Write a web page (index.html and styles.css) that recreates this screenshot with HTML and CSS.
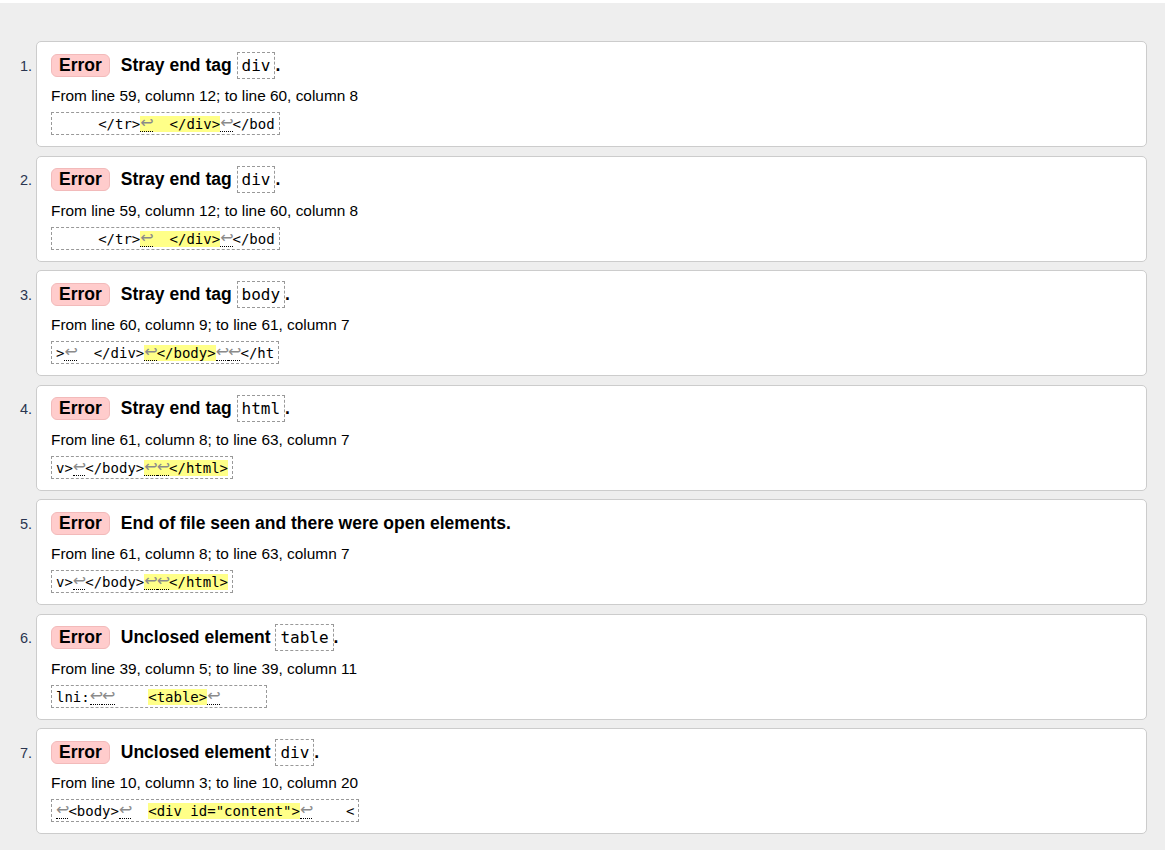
FILE: index.html
```html
<!DOCTYPE html>
<html lang="en">
<head>
<meta charset="utf-8">
<title>Validation results</title>
<link rel="stylesheet" href="styles.css">
</head>
<body>
<ol class="messages">
  <li class="msg">
    <p class="head"><span class="badge">Error</span><span class="text">Stray end tag <code>div</code>.</span></p>
    <p class="loc">From line 59, column 12; to line 60, column 8</p>
    <p class="extract"><code>     &lt;/tr&gt;<b><span class="lf">↩</span>  &lt;/div&gt;</b><span class="lf">↩</span>&lt;/bod</code></p>
  </li>
  <li class="msg">
    <p class="head"><span class="badge">Error</span><span class="text">Stray end tag <code>div</code>.</span></p>
    <p class="loc">From line 59, column 12; to line 60, column 8</p>
    <p class="extract"><code>     &lt;/tr&gt;<b><span class="lf">↩</span>  &lt;/div&gt;</b><span class="lf">↩</span>&lt;/bod</code></p>
  </li>
  <li class="msg">
    <p class="head"><span class="badge">Error</span><span class="text">Stray end tag <code>body</code>.</span></p>
    <p class="loc">From line 60, column 9; to line 61, column 7</p>
    <p class="extract"><code>&gt;<span class="lf">↩</span>  &lt;/div&gt;<b><span class="lf">↩</span>&lt;/body&gt;</b><span class="lf">↩</span><span class="lf">↩</span>&lt;/ht</code></p>
  </li>
  <li class="msg">
    <p class="head"><span class="badge">Error</span><span class="text">Stray end tag <code>html</code>.</span></p>
    <p class="loc">From line 61, column 8; to line 63, column 7</p>
    <p class="extract"><code>v&gt;<span class="lf">↩</span>&lt;/body&gt;<b><span class="lf">↩</span><span class="lf">↩</span>&lt;/html&gt;</b></code></p>
  </li>
  <li class="msg">
    <p class="head"><span class="badge">Error</span><span class="text">End of file seen and there were open elements.</span></p>
    <p class="loc">From line 61, column 8; to line 63, column 7</p>
    <p class="extract"><code>v&gt;<span class="lf">↩</span>&lt;/body&gt;<b><span class="lf">↩</span><span class="lf">↩</span>&lt;/html&gt;</b></code></p>
  </li>
  <li class="msg">
    <p class="head"><span class="badge">Error</span><span class="text">Unclosed element <code>table</code>.</span></p>
    <p class="loc">From line 39, column 5; to line 39, column 11</p>
    <p class="extract"><code>lni:<span class="lf">↩</span><span class="lf">↩</span>    <b>&lt;table&gt;</b><span class="lf">↩</span>     </code></p>
  </li>
  <li class="msg">
    <p class="head"><span class="badge">Error</span><span class="text">Unclosed element <code>div</code>.</span></p>
    <p class="loc">From line 10, column 3; to line 10, column 20</p>
    <p class="extract"><code><span class="lf">↩</span>&lt;body&gt;<span class="lf">↩</span>  <b>&lt;div id="content"&gt;</b><span class="lf">↩</span>    &lt;</code></p>
  </li>
</ol>
</body>
</html>
```
FILE: styles.css
```css
html {
  background: #fff;
}
body {
  margin: 3px 0 0;
  background: #eee;
  font-family: "Liberation Sans", Arial, sans-serif;
  color: #000;
  min-height: 847px;
}
.messages {
  margin: 0;
  padding: 38px 18px 10px 36px;
  list-style: decimal;
}
.msg {
  background: #fff;
  border: 1px solid #ccc;
  border-radius: 5px;
  padding: 10px 14px 11px;
  margin-bottom: 8.5px;
  font-size: 14.5px;
  color: #1f2a44;
}
.msg::marker {
  color: #2a3550;
}
.msg p {
  margin: 0;
  color: #000;
}
.head {
  display: flex;
  align-items: center;
  gap: 11px;
  height: 26px;
  font-size: 17.5px;
  font-weight: bold;
}
.badge {
  background: #fcc;
  border: 1px solid #f2baba;
  border-radius: 6px;
  padding: 1px 7px;
  line-height: 19px;
}
.head code {
  font-family: "DejaVu Sans Mono", monospace;
  font-weight: normal;
  font-size: 16px;
  border: 1px dashed #999;
  padding: 3px 4px;
}
.loc {
  margin-top: 9px !important;
  line-height: 18px;
  font-size: 15.4px;
}
.extract {
  margin-top: 7px !important;
  display: flex;
}
.extract code {
  display: block;
  white-space: pre;
  font-family: "DejaVu Sans Mono", monospace;
  font-size: 14px;
  line-height: 18px;
  height: 18px;
  border: 1px dashed #999;
  padding: 2px 4px 1px;
}
.extract b {
  font-weight: normal;
  background: #ff8;
}
.lf {
  display: inline-block;
  width: 12.4px;
  color: #8a8a8a;
  font-family: "DejaVu Sans", sans-serif;
  font-size: 16px;
  line-height: 16px;
  border-bottom: 1px dotted #000;
  vertical-align: top;
}
```
